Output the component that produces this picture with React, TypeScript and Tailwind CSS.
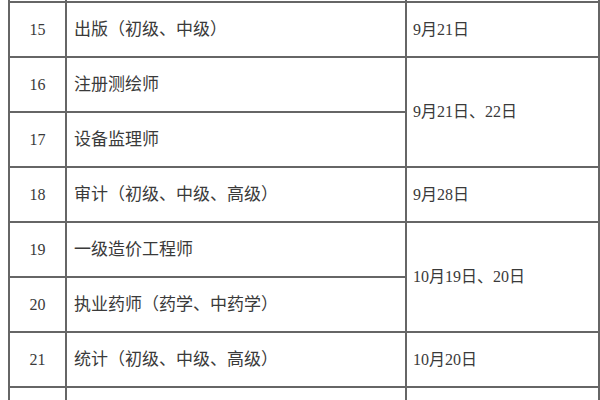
import React from "react";

const font = { fontFamily: '"Liberation Serif", "Noto Sans CJK SC", serif' };

const td = "border-2 border-[#666] h-[55px] p-0 align-middle";
const name = `${td} pl-[7px] text-[17px]`;

export default function App() {
  return (
    <div className="w-[600px] h-[400px] overflow-hidden bg-white text-[16px] text-[#3a3a3a]" style={font}>
      <table className="ml-[8px] -mt-[54px] w-[590px] table-fixed border-collapse">
        <colgroup>
          <col className="w-[57px]" />
          <col className="w-[340px]" />
          <col className="w-[193px]" />
        </colgroup>
        <tbody>
          <tr>
            <td className={td}></td>
            <td className={td}></td>
            <td className={td}></td>
          </tr>
          <tr>
            <td className={`${td} text-center`}>15</td>
            <td className={name}>出版（初级、中级）</td>
            <td className={`${td} pl-[6px]`}>9月21日</td>
          </tr>
          <tr>
            <td className={`${td} text-center`}>16</td>
            <td className={name}>注册测绘师</td>
            <td className={`${td} pl-[6px]`} rowSpan={2}>9月21日、22日</td>
          </tr>
          <tr>
            <td className={`${td} text-center`}>17</td>
            <td className={name}>设备监理师</td>
          </tr>
          <tr>
            <td className={`${td} text-center`}>18</td>
            <td className={name}>审计（初级、中级、高级）</td>
            <td className={`${td} pl-[6px]`}>9月28日</td>
          </tr>
          <tr>
            <td className={`${td} text-center`}>19</td>
            <td className={name}>一级造价工程师</td>
            <td className={`${td} pl-[6px]`} rowSpan={2}>10月19日、20日</td>
          </tr>
          <tr>
            <td className={`${td} text-center`}>20</td>
            <td className={name}>执业药师（药学、中药学）</td>
          </tr>
          <tr>
            <td className={`${td} text-center`}>21</td>
            <td className={name}>统计（初级、中级、高级）</td>
            <td className={`${td} pl-[6px]`}>10月20日</td>
          </tr>
          <tr>
            <td className={td}></td>
            <td className={td}></td>
            <td className={td}></td>
          </tr>
        </tbody>
      </table>
    </div>
  );
}
